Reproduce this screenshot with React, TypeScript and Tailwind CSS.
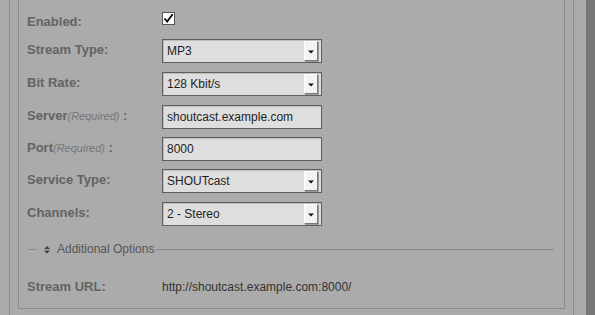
const LABEL = "w-[135px] shrink-0 pt-[3px] text-[13px] leading-[15px] font-bold text-[#636363]";

function Req({ name }: { name: string }) {
  return (
    <div className={LABEL}>
      {name}
      <span className="text-[11px] font-normal italic text-[#767676]">(Required)</span> :
    </div>
  );
}

function Label({ text }: { text: string }) {
  return <div className={LABEL}>{text}</div>;
}

// Beveled dropdown button with the small black triangle.
function DropButton() {
  return (
    <span className="flex h-[20px] w-[14px] items-center justify-center border-t border-l border-t-white border-l-white border-r border-b border-r-[#7a7a7a] border-b-[#7a7a7a] bg-[#f3f3f3] shadow-[1px_1px_0_#9a9a9a]">
      <svg width="6" height="4" viewBox="0 0 6 4" className="mt-[1px]">
        <path d="M0 0.5 H6 L3 3.5 Z" fill="#111" />
      </svg>
    </span>
  );
}

function Select({ value }: { value: string }) {
  return (
    <div className="flex h-[24px] w-[160px] items-center justify-between border border-[#5f5f5f] bg-[#dedede] pl-[4px] pr-[3px] text-[12px] text-[#1e1e1e] shadow-[inset_1px_1px_0_#bdbdbd]">
      <span>{value}</span>
      <DropButton />
    </div>
  );
}

function Input({ value }: { value: string }) {
  return (
    <div className="flex h-[24px] w-[160px] items-center border border-[#5f5f5f] bg-[#dedede] pl-[4px] text-[12px] text-[#1e1e1e] shadow-[inset_1px_1px_0_#bdbdbd]">
      {value}
    </div>
  );
}

function Row({ className, children }: { className?: string; children: React.ReactNode }) {
  return <div className={`flex h-[24px] items-start ${className ?? ""}`}>{children}</div>;
}

export default function App() {
  return (
    <div
      className="flex h-[315px] w-[595px] overflow-hidden bg-[#ababab]"
      style={{ fontFamily: '"Liberation Sans", Arial, sans-serif' }}
    >
      <div className="flex-1 pl-[9px] pr-[12px]">
        <div className="h-full border-x border-[#8d8d8d] px-[8px]">
          <div className="border-x border-b border-[#8d8d8d] pb-[8px] pl-[8px] pr-[10px] pt-[11px]">
            <Row>
              <Label text="Enabled:" />
              <span className="mt-[1px] flex h-[13px] w-[13px] items-center justify-center border border-[#555] bg-white">
                <svg width="11" height="11" viewBox="0 0 11 11">
                  <path d="M1.5 5.5 L4.2 8.6 L9.6 1.2" fill="none" stroke="#000" strokeWidth="1.8" />
                </svg>
              </span>
            </Row>
            <Row className="mt-[4px]">
              <Label text="Stream Type:" />
              <Select value="MP3" />
            </Row>
            <Row className="mt-[9px]">
              <Label text="Bit Rate:" />
              <Select value="128 Kbit/s" />
            </Row>
            <Row className="mt-[9px]">
              <Req name="Server" />
              <Input value="shoutcast.example.com" />
            </Row>
            <Row className="mt-[8px]">
              <Req name="Port" />
              <Input value="8000" />
            </Row>
            <Row className="mt-[8px]">
              <Label text="Service Type:" />
              <Select value="SHOUTcast" />
            </Row>
            <Row className="mt-[9px]">
              <Label text="Channels:" />
              <Select value="2 - Stereo" />
            </Row>

            {/* collapsed "Additional Options" fieldset */}
            <div className="mt-[16px] ml-[1px] flex h-[15px] items-center">
              <span className="h-px w-[9px] bg-[#8a8a8a]" />
              <svg width="6" height="8" viewBox="0 0 6 8" className="ml-[7px]">
                <path d="M0 3 L3 0 L6 3 Z M0 4.5 L6 4.5 L3 7.5 Z" fill="#3e3e3e" />
              </svg>
              <span className="ml-[7px] text-[12px] leading-[15px] text-[#555]">Additional Options</span>
              <span className="ml-[2px] h-px flex-1 bg-[#8a8a8a]" />
            </div>

            <Row className="mt-[19px]">
              <Label text="Stream URL:" />
              <span className="pt-[4px] text-[12px] leading-[15px] text-[#333]">
                http://shoutcast.example.com:8000/
              </span>
            </Row>
          </div>
        </div>
      </div>
      <div className="w-[9px] bg-[#777]" />
    </div>
  );
}
